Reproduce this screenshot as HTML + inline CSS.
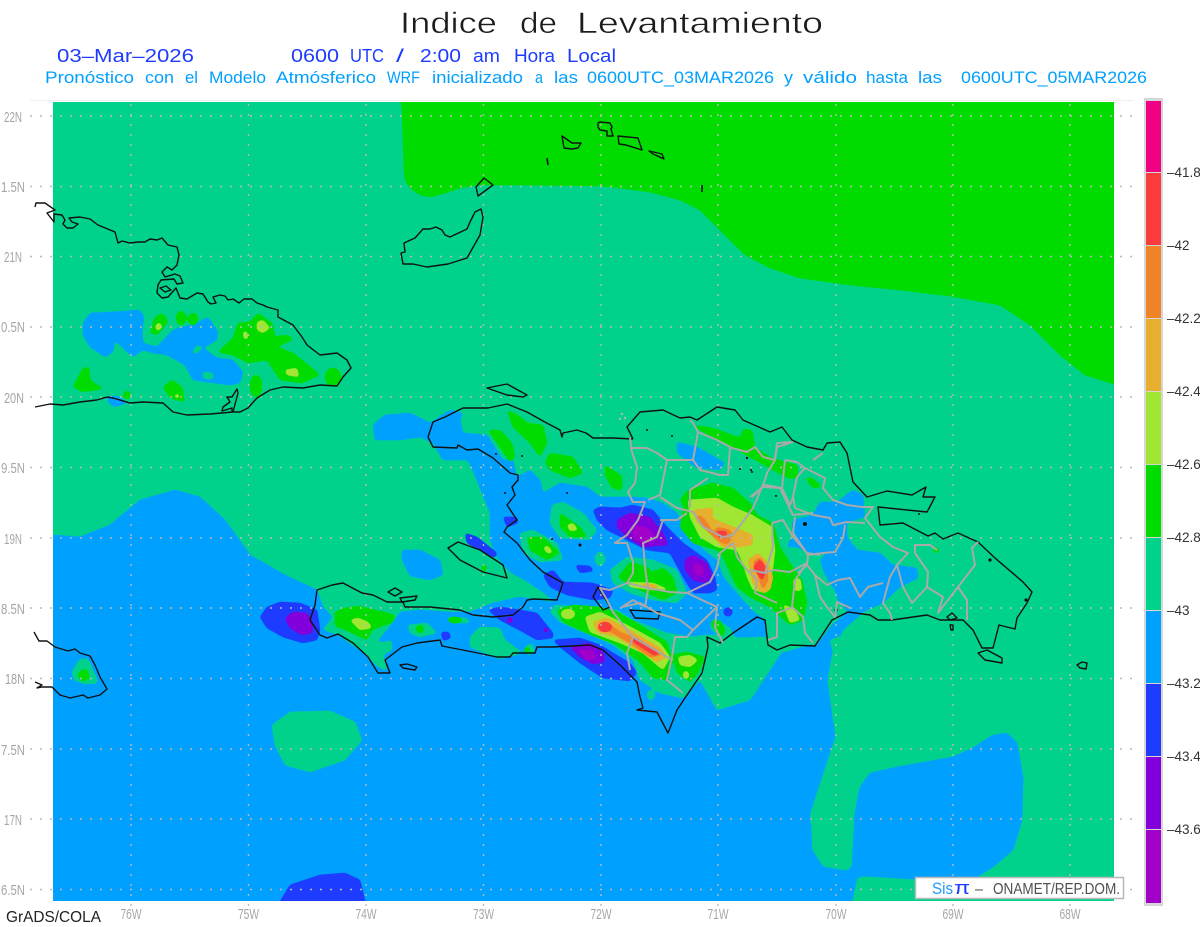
<!DOCTYPE html>
<html>
<head>
<meta charset="utf-8">
<title>Indice de Levantamiento</title>
<style>
html,body{margin:0;padding:0;background:#fff;width:1200px;height:927px;overflow:hidden}
svg{display:block;position:absolute;left:0;top:0}
text{font-family:"Liberation Sans",sans-serif}
</style>
</head>
<body>
<svg width="1200" height="927" viewBox="0 0 1200 927" xmlns="http://www.w3.org/2000/svg">
<defs>
<clipPath id="m"><rect x="53" y="102" width="1061" height="799"/></clipPath>
<filter id="s" filterUnits="userSpaceOnUse" x="0" y="60" width="1200" height="880" color-interpolation-filters="sRGB">
<feGaussianBlur stdDeviation="1.6"/>
<feComponentTransfer><feFuncA type="linear" slope="7" intercept="-2.4"/></feComponentTransfer>
</filter>
</defs>

<!-- titles -->
<g fill="#1c1c1c" stroke="#fff" stroke-width=".5" font-size="30">
<text x="400" y="33" textLength="97" lengthAdjust="spacingAndGlyphs">Indice</text>
<text x="520" y="33" textLength="37" lengthAdjust="spacingAndGlyphs">de</text>
<text x="577" y="33" textLength="246" lengthAdjust="spacingAndGlyphs">Levantamiento</text>
</g>
<g fill="#1e3cff" font-size="18">
<text x="57" y="62" textLength="137" lengthAdjust="spacingAndGlyphs">03–Mar–2026</text>
<text x="291" y="62" textLength="48" lengthAdjust="spacingAndGlyphs">0600</text>
<text x="350" y="62" textLength="34" lengthAdjust="spacingAndGlyphs">UTC</text>
<text x="396" y="62" textLength="8" lengthAdjust="spacingAndGlyphs">/</text>
<text x="420" y="62" textLength="41" lengthAdjust="spacingAndGlyphs">2:00</text>
<text x="473" y="62" textLength="27" lengthAdjust="spacingAndGlyphs">am</text>
<text x="514" y="62" textLength="41" lengthAdjust="spacingAndGlyphs">Hora</text>
<text x="567" y="62" textLength="49" lengthAdjust="spacingAndGlyphs">Local</text>
</g>
<g fill="#00a0ff" font-size="17">
<text x="45" y="83" textLength="89" lengthAdjust="spacingAndGlyphs">Pronóstico</text>
<text x="145" y="83" textLength="29" lengthAdjust="spacingAndGlyphs">con</text>
<text x="185" y="83" textLength="13" lengthAdjust="spacingAndGlyphs">el</text>
<text x="209" y="83" textLength="57" lengthAdjust="spacingAndGlyphs">Modelo</text>
<text x="276" y="83" textLength="100" lengthAdjust="spacingAndGlyphs">Atmósferico</text>
<text x="387" y="83" textLength="33" lengthAdjust="spacingAndGlyphs">WRF</text>
<text x="432" y="83" textLength="91" lengthAdjust="spacingAndGlyphs">inicializado</text>
<text x="535" y="83" textLength="8" lengthAdjust="spacingAndGlyphs">a</text>
<text x="554" y="83" textLength="24" lengthAdjust="spacingAndGlyphs">las</text>
<text x="587" y="83" textLength="187" lengthAdjust="spacingAndGlyphs">0600UTC_03MAR2026</text>
<text x="784" y="83" textLength="9" lengthAdjust="spacingAndGlyphs">y</text>
<text x="803" y="83" textLength="54" lengthAdjust="spacingAndGlyphs">válido</text>
<text x="866" y="83" textLength="42" lengthAdjust="spacingAndGlyphs">hasta</text>
<text x="918" y="83" textLength="24" lengthAdjust="spacingAndGlyphs">las</text>
<text x="961" y="83" textLength="186" lengthAdjust="spacingAndGlyphs">0600UTC_05MAR2026</text>
</g>

<!-- map -->
<rect x="53" y="102" width="1061" height="799" fill="#00d28c"/>
<g clip-path="url(#m)">
<g filter="url(#s)">
<polygon fill="#00dc00" points="400,90 402,110 404,170 405,180 410,188 420,195 430,197 445,193 460,188 470,186 480,185 520,185 600,186 620,188 650,192 680,200 700,210 715,225 730,240 745,255 770,268 800,278 850,285 900,290 950,296 1000,305 1030,325 1060,355 1085,375 1114,384 1130,386 1130,90"/>
</g>

<g filter="url(#s)" fill="#00a0ff">
<polygon points="40,535 53,535 80,537 110,525 140,500 175,490 200,497 225,520 250,555 285,575 317,590 323,607 332,617 322,630 337,635 363,653 377,667 388,672 384,655 393,650 392,640 377,642 393,623 400,612 420,610 447,612 470,612 493,603 520,597 550,602 557,604 543,592 525,580 510,572 497,557 490,540 490,527 490,513 477,480 468,460 443,460 433,443 420,437 400,440 375,440 373,425 385,415 410,413 430,423 450,410 463,413 460,420 463,433 487,435 503,460 513,460 517,477 530,470 540,480 543,493 560,483 587,487 600,497 633,497 647,498 663,503 677,513 683,527 693,540 707,553 717,560 723,577 740,597 755,613 765,620 767,637 783,653 803,647 817,645 832,625 848,612 862,613 843,630 832,653 827,680 835,737 823,773 810,813 812,850 823,867 847,871 852,867 855,813 860,787 870,773 897,767 953,757 973,748 993,735 1007,733 1017,743 1023,777 1022,820 1013,850 993,867 977,877 913,879 863,876 857,878 852,901 852,920 40,920"/>
<polygon points="83,323 90,313 113,312 140,310 144,317 142,333 143,343 157,347 173,330 197,323 208,317 218,332 217,340 203,348 217,358 233,360 243,372 240,383 230,385 207,382 193,380 185,365 167,355 153,353 143,350 133,357 125,350 115,340 113,352 105,357 90,347 83,335"/>
<polygon points="105,397 117,396 128,403 113,407"/>
<polygon points="402,550 420,550 440,560 443,575 430,580 410,576 402,560"/>
<polygon points="677,442 697,447 725,463 720,470 697,468 677,453"/>
<polygon points="792,527 793,520 813,515 820,502 837,502 853,490 863,495 865,517 847,522 847,537 857,550 880,553 893,565 917,568 918,578 900,587 883,603 867,610 862,613 848,612 838,600 835,590 825,575 820,560 827,553 810,553 797,547 787,547 790,540 797,537"/>
</g>

<!-- mint holes -->
<g filter="url(#s)" fill="#00d28c">
<polygon points="555,605 617,610 633,620 667,633 690,637 707,635 733,638 767,637 783,650 750,700 717,710 700,680 683,698 660,693 640,680 633,660 610,643 585,633 560,622 550,612"/>
<polygon points="520,533 533,530 557,543 563,560 540,562 523,553"/>
<polygon points="552,505 563,502 583,513 597,530 590,540 560,538 550,523"/>
<polygon points="610,570 627,557 653,560 677,570 687,593 677,603 653,600 630,593 613,583"/>
<ellipse cx="600" cy="559" rx="5" ry="7"/>
<polygon points="470,637 480,627 500,628 505,640 523,653 500,659 470,647"/>
<polygon points="445,617 467,618 470,623 452,623"/>
<polygon points="408,625 427,623 437,633 420,637 410,633"/>
<polygon points="525,647 532,643 535,653 527,655"/>
<polygon points="272,725 290,712 330,711 355,722 362,740 345,760 310,772 285,765 275,745"/>
<polygon points="192,352 198,345 203,348 195,354"/>
<polygon points="202,372 213,373 213,379 204,379"/>
<ellipse cx="651" cy="695" rx="4" ry="5"/>
<polygon points="72,672 80,659 88,659 95,675 98,683 85,684 74,680"/>
<polygon points="830,640 845,635 855,630 845,650 835,660"/>
<polygon points="713,618 730,628 735,638 718,635 710,628"/>
</g>

<!-- dark blue -->
<g filter="url(#s)" fill="#1e3cff">
<polygon points="260,617 267,607 280,602 300,603 317,610 320,630 317,640 303,643 283,637 267,628"/>
<polygon points="465,533 477,537 497,553 495,558 480,550 467,543"/>
<polygon points="503,517 517,517 518,523 507,527"/>
<polygon points="593,510 600,507 620,508 633,505 653,510 667,527 683,543 707,560 715,577 717,590 710,593 693,593 683,577 670,553 647,550 627,540 607,530 597,520"/>
<polygon points="543,575 553,570 563,582 593,583 613,590 610,598 593,600 567,595 550,587"/>
<polygon points="575,565 590,566 594,571 580,573"/>
<polygon points="488,610 500,607 520,610 537,613 553,633 553,638 537,640 523,632 500,620"/>
<polygon points="553,640 580,638 600,645 613,653 630,663 637,673 630,681 603,678 580,663 560,647"/>
<polygon points="441,632 449,632 451,638 443,641"/>
<circle cx="728" cy="612" r="4.5"/>
<polygon points="278,905 290,885 320,875 345,873 360,880 366,905"/>
</g>
<!-- violet -->
<g filter="url(#s)" fill="#8200dc">
<polygon points="285,618 293,612 307,613 313,623 312,633 302,635 290,628"/>
<polygon points="617,520 630,513 650,517 663,533 668,545 643,547 627,537 617,527"/>
<polygon points="685,560 693,555 707,563 712,577 705,583 693,580 685,570"/>
<polygon points="570,647 590,643 603,652 605,662 593,664 580,657"/>
<ellipse cx="510" cy="620" rx="3" ry="3"/>
<ellipse cx="546" cy="630" rx="3" ry="2"/>
</g>
<!-- purple -->
<g filter="url(#s)" fill="#a000c8">
<polygon points="633,525 648,528 657,540 645,544 633,538"/>
<polygon points="693,563 703,566 704,575 696,576"/>
<polygon points="578,650 592,650 597,659 587,660"/>
</g>

<!-- green -->
<g filter="url(#s)" fill="#00dc00">
<polygon points="150,333 155,317 163,313 168,322 157,335"/>
<ellipse cx="181" cy="318" rx="5" ry="7"/>
<ellipse cx="193" cy="319" rx="5" ry="6"/>
<polygon points="218,352 233,338 238,323 250,322 258,313 272,323 275,337 285,335 292,337 292,340 277,347 293,353 302,360 320,375 302,383 280,380 267,360 248,363 233,355"/>
<ellipse cx="333" cy="377" rx="8" ry="9"/>
<ellipse cx="256" cy="386" rx="6" ry="11"/>
<polygon points="73,387 83,368 89,367 90,380 100,387 108,388 83,392"/>
<polygon points="163,387 172,380 182,387 185,402 170,398"/>
<ellipse cx="127" cy="395" rx="4" ry="4"/>
<polygon points="488,430 500,430 512,443 515,457 510,462 497,443"/>
<polygon points="507,410 518,415 527,423 543,425 547,443 540,457 530,443 513,427"/>
<polygon points="550,453 573,457 583,473 570,478 550,470 545,462"/>
<polygon points="605,465 612,470 622,476 622,490 612,488 605,475"/>
<polygon points="560,513 580,527 587,537 570,537 560,527"/>
<polygon points="527,537 543,537 560,553 547,560 530,550"/>
<polygon points="618,577 630,562 647,567 652,572 663,568 673,577 677,593 663,600 633,587"/>
<polygon points="557,610 573,605 600,607 617,612 640,625 667,642 672,660 668,680 653,678 640,662 617,645 587,633 563,622"/>
<polygon points="672,655 687,652 705,657 698,673 690,682 677,673"/>
<polygon points="688,490 713,483 733,488 750,503 757,515 773,523 780,547 790,563 802,580 807,603 803,620 790,625 770,607 750,597 737,587 723,557 717,550 693,543 680,527 684,507 680,500"/>
<polygon points="693,425 713,428 740,438 743,429 752,430 755,448 772,458 785,462 797,465 798,477 790,479 773,470 750,457 723,442 703,432"/>
<polygon points="805,478 812,478 822,487 813,488"/>
<polygon points="710,622 720,620 725,630 723,637 715,630"/>
<ellipse cx="936" cy="550" rx="3" ry="3"/>
<ellipse cx="484" cy="568" rx="2.5" ry="3.5"/>
<ellipse cx="420" cy="629" rx="4" ry="4"/>
<ellipse cx="455" cy="620" rx="7" ry="3"/>
<ellipse cx="527" cy="650" rx="3" ry="3"/>
<polygon points="77,674 86,668 90,678 82,682"/>
<polygon points="335,612 345,608 358,606 375,610 395,615 393,622 372,630 367,640 358,636 346,630 335,626"/>
</g>

<!-- yellow green -->
<g filter="url(#s)" fill="#a0e632">
<polygon points="155,326 160,322 162,328 157,331"/>
<polygon points="257,322 263,320 270,328 263,333 257,330"/>
<polygon points="243,332 247,331 248,339 244,339"/>
<polygon points="285,370 297,368 299,377 287,375"/>
<ellipse cx="177" cy="396" rx="2.5" ry="2"/>
<polygon points="567,525 573,523 578,530 570,531"/>
<polygon points="543,547 548,546 553,553 547,553"/>
<polygon points="627,582 653,583 670,590 653,590 630,587"/>
<polygon points="585,617 600,612 627,625 660,643 670,657 663,670 643,653 620,643 590,632"/>
<ellipse cx="568" cy="614" rx="7" ry="5"/>
<polygon points="678,657 690,655 698,660 690,667 680,665"/>
<ellipse cx="686" cy="675" rx="3" ry="4"/>
<polygon points="688,500 717,498 733,507 752,515 772,527 775,550 773,567 767,593 753,590 747,577 743,563 737,550 717,547 700,537 690,517"/>
<polygon points="793,580 800,578 802,590 795,591"/>
<polygon points="783,604 795,610 800,620 790,623"/>
<polygon points="350,620 358,618 368,622 372,628 360,630"/>
</g>

<!-- gold -->
<g filter="url(#s)" fill="#e6af2d">
<polygon points="593,622 607,618 630,630 660,648 667,657 657,662 633,647 617,637 597,632"/>
<polygon points="636,583 652,584 662,588 650,588"/>
<polygon points="693,510 713,508 712,518 723,523 753,535 752,545 737,547 723,547 710,533 697,522"/>
<polygon points="748,560 758,553 768,563 773,577 770,590 762,593 753,583 750,570"/>
</g>
<!-- orange -->
<g filter="url(#s)" fill="#f08228">
<polygon points="597,627 607,622 620,632 633,637 663,655 650,657 630,643 613,633"/>
<polygon points="695,515 703,517 713,532 718,527 730,530 733,537 727,545 717,540 703,527"/>
<polygon points="753,562 760,557 767,567 768,580 763,590 757,573"/>
</g>
<!-- red -->
<g filter="url(#s)" fill="#fa3c3c">
<ellipse cx="605" cy="627" rx="7" ry="5"/>
<polygon points="633,636 660,652 655,656 633,642"/>
<polygon points="715,531 727,531 726,538 719,538"/>
<polygon points="753,567 760,559 767,570 762,581"/>
</g>
</g>

<!-- grid -->
<g stroke="#b9b9b9" stroke-width="1.4" stroke-dasharray="2 8" fill="none">
<path d="M30 116H1133M30 186.5H1133M30 256.5H1133M30 327H1133M30 397H1133M30 467.5H1133M30 538H1133M30 608H1133M30 678.5H1133M30 749H1133M30 819H1133M30 889.5H1133"/>
<path d="M131 104V908M248.5 104V908M366 104V908M483.5 104V908M601 104V908M718 104V908M836 104V908M953 104V908M1070 104V908"/>
</g>
<line x1="30" y1="100.5" x2="1133" y2="100.5" stroke="#eee" stroke-width="1"/>

<!-- coast -->
<g fill="none" stroke="#111" stroke-width="1.4" stroke-linejoin="round">
<polyline points="35,207 36,203 45,203 55,210 47,213 54,222 54,214 62,215 65,220 63,224 67,228 73,228 78,224 72,222 69,218 80,217 90,219 98,225 115,232 118,243 122,241 130,243 138,242 145,242 150,239 157,240 162,238 168,245 177,247 179,255 177,265 172,270 167,267 162,272 165,277 175,274 180,276 183,283 177,284 174,279 161,280 158,285 157,293 162,298 168,297 176,288 180,298 187,299 197,293 203,294 208,302 211,304 216,303 213,297 220,295 225,296 228,300 233,299 239,303 244,299 252,299 257,303 263,305 267,307 278,310 278,317 293,325 302,337 307,345 320,355 337,353 347,360 351,368 343,377 337,386 320,385 303,388 283,387 270,390 257,398 248,408 240,412 233,412 238,393 237,389 232,397 227,397 230,402 223,407 222,411 232,408 232,412 222,413 210,414 187,415 173,412 163,403 143,402 130,403 113,398 107,397 97,400 80,402 63,405 50,404 35,407"/>
<polygon points="160,288 166,286 171,290 165,292"/>
<polygon points="401,253 405,252 404,243 415,238 423,229 430,229 436,227 442,230 445,235 450,237 467,229 470,222 475,212 481,209 483,217 480,235 467,258 448,264 427,267 413,264 403,264"/>
<polygon points="476,187 484,178 493,185 478,196"/>
<polygon points="562,136 572,143 581,143 578,148 572,149 564,148"/>
<polygon points="598,123 600,122 610,123 612,127 611,129 613,136 607,136 607,131 600,130 598,127"/>
<polygon points="618,136 638,138 642,150 626,145 619,144"/>
<polygon points="649,151 662,154 664,159 653,154"/>
<path d="M547 158L548 165M702 185L702 192" stroke-width="1.6"/>
<polyline points="34,632 39,641 47,641 55,647 68,651 75,649 80,653 90,656 95,665 100,677 107,689 100,695 88,698 83,695 70,698 60,695 52,687 42,687 37,688 42,685 35,682"/>
<polygon points="487,388 507,384 527,395 523,397 507,395"/>
<polygon points="448,548 458,542 480,550 503,565 507,578 483,572 460,560"/>
<polygon points="400,665 407,664 417,667 415,670 403,668"/>
<polygon points="388,592 395,588 402,592 395,596"/>
<polygon points="400,598 417,596 415,600 402,602"/>
<polygon points="593,597 598,587 610,607 603,610"/>
<polygon points="630,610 660,612 658,619 635,618"/>
<polyline points="633,439 613,438 593,438 586,433 577,430 563,433 562,437 560,430 543,421 527,412 507,404 488,408 463,408 445,417 433,422 428,437 433,447 457,448 458,445 467,450 478,449 493,458 510,473 518,475 518,480 512,487 515,495 507,505 517,520 507,527 504,532 517,543 530,560 543,572 563,583 557,600 533,599 527,600 523,607 513,615 493,617 473,615 460,610 430,607 405,607 403,602 387,602 373,595 362,593 343,583 332,585 317,590 315,605 310,620 320,635 327,638 338,634 353,643 368,657 378,673 390,673 385,660 402,647 417,643 440,640 442,646 473,652 497,657 510,657 513,653 535,653 537,647 553,647 590,645 603,650 620,665 637,682 640,697 643,708 637,710 657,712 668,733 677,710 685,698 702,673 708,647 707,637 720,643 733,633 757,617 765,620 768,645 777,650 790,645 815,646 832,620 848,612 870,615 878,620 892,620 927,615 940,620 963,620 973,630 982,648 993,648 999,625 1015,629 1017,618 1027,603 1032,592 1023,582 995,558 978,542 958,533 943,539 935,533 928,536 903,523 880,525 878,507 927,512 935,497 923,497 926,487 912,495 887,491 867,497 853,482 847,453 840,442 827,443 823,450 807,447 792,440 782,427 770,432 743,420 735,410 717,407 697,420 690,417 680,418 663,410 640,412 627,427 633,439"/>
<polygon points="978,653 987,650 1002,658 1002,663 985,660"/>
<polygon points="1077,665 1082,662 1087,663 1086,669 1080,668"/>
<polygon points="947,617 952,613 957,618 950,620"/>
<polygon points="950,625 953,625 953,630 951,630"/>
</g>
<g fill="#111">
<circle cx="747" cy="458" r="1.2"/><circle cx="740" cy="469" r="1"/><circle cx="751" cy="470" r="1"/><circle cx="752" cy="472" r="1"/><circle cx="805" cy="524" r="2"/><circle cx="990" cy="560" r="1.6"/><circle cx="1026" cy="600" r="1.6"/><circle cx="836" cy="610" r="1.6"/><circle cx="847" cy="607" r="1"/><circle cx="776" cy="496" r="1"/><circle cx="919" cy="514" r="1"/><circle cx="496" cy="454" r="1"/><circle cx="505" cy="493" r="1"/><circle cx="567" cy="493" r="1"/><circle cx="580" cy="545" r="1.5"/><circle cx="552" cy="539" r="1"/><circle cx="647" cy="430" r="1"/><circle cx="672" cy="436" r="1"/><circle cx="522" cy="456" r="1"/>
</g>
<g fill="#b4b4b4"><circle cx="622" cy="414" r="1.2"/><circle cx="625" cy="418" r="1.2"/><circle cx="620" cy="419" r="1.2"/><circle cx="642" cy="515" r="1"/></g>

<!-- provinces -->
<g fill="none" stroke="#a9a9a9" stroke-width="2" stroke-linejoin="round">
<polyline points="630,438 632,452 637,467 635,483 628,492 633,502 645,502 638,520 627,535 615,543 627,543 633,562 633,573 627,583 610,590 600,588 607,600 613,612 627,630 633,637 627,653 630,670"/>
<polyline points="630,448 647,448 657,453 667,460 663,480 660,495 648,500"/>
<polyline points="667,460 693,460 698,432 693,423 690,420"/>
<polyline points="698,432 717,440 732,448 747,452 755,447 763,457 775,460 777,443 792,442"/>
<polyline points="693,460 700,470 720,475 728,475 730,448"/>
<polyline points="708,478 690,490 690,508"/>
<polyline points="660,497 677,508 693,512 703,527 723,537 733,535 753,508 765,480 767,473 775,460"/>
<polyline points="750,497 763,487 780,488 788,505 793,515 813,513"/>
<polyline points="660,520 677,520 687,513"/>
<polyline points="663,520 657,537 643,543 645,567 648,590 645,607"/>
<polyline points="627,583 648,588 670,592 687,593 710,582 717,568 720,553 733,543 737,557 747,570 757,580 755,593 777,603"/>
<polyline points="772,523 773,547 765,573 750,570"/>
<polyline points="765,573 773,570 790,572 807,563 795,580 792,607 803,617 805,633 813,643"/>
<polyline points="772,523 783,520 793,537 807,553 820,555"/>
<polyline points="793,607 777,613 777,637 768,640"/>
<polyline points="687,593 717,607 693,630 680,620 657,613 640,603 622,607 633,600 645,607"/>
<polyline points="717,607 715,627 723,643"/>
<polyline points="693,630 687,637 675,637 672,657 667,680 683,693"/>
<polyline points="633,637 667,657 673,660"/>
<polyline points="793,442 777,447 775,460"/>
<polyline points="785,460 797,462 805,468 825,478 823,488 833,500 847,505 862,507 873,507 865,518 880,537 893,547 908,553 897,565 890,577 883,603 890,613 892,620"/>
<polyline points="813,460 823,453"/>
<polyline points="805,468 797,477 793,497 795,508 813,515 830,518 833,525 847,522 865,523"/>
<polyline points="795,517 793,533 808,555 807,565 798,573"/>
<polyline points="808,555 823,553 835,552 843,538 845,525"/>
<polyline points="807,565 815,575 827,585 838,580 850,578 860,597 868,587 883,583"/>
<polyline points="815,575 820,597 827,607 835,617 837,602 850,608"/>
<polyline points="897,565 903,587 912,603 927,587 928,572 915,553 915,545 930,545 937,550"/>
<polyline points="927,587 943,597 938,613 958,587 967,600 967,620"/>
<polyline points="958,587 975,565 972,548 978,542"/>
<polyline points="785,460 782,488 790,505 793,497"/>
<polyline points="782,488 765,485 752,497"/>
</g>

<!-- axis labels -->
<g fill="#a6a6a6" font-size="15">
<text x="4" y="122" textLength="18" lengthAdjust="spacingAndGlyphs">22N</text>
<text x="1" y="192" textLength="24" lengthAdjust="spacingAndGlyphs">1.5N</text>
<text x="4" y="262" textLength="18" lengthAdjust="spacingAndGlyphs">21N</text>
<text x="1" y="332" textLength="24" lengthAdjust="spacingAndGlyphs">0.5N</text>
<text x="4" y="403" textLength="20" lengthAdjust="spacingAndGlyphs">20N</text>
<text x="1" y="473" textLength="24" lengthAdjust="spacingAndGlyphs">9.5N</text>
<text x="4" y="544" textLength="18" lengthAdjust="spacingAndGlyphs">19N</text>
<text x="1" y="614" textLength="24" lengthAdjust="spacingAndGlyphs">8.5N</text>
<text x="5" y="684" textLength="20" lengthAdjust="spacingAndGlyphs">18N</text>
<text x="1" y="755" textLength="24" lengthAdjust="spacingAndGlyphs">7.5N</text>
<text x="4" y="825" textLength="18" lengthAdjust="spacingAndGlyphs">17N</text>
<text x="1" y="895" textLength="24" lengthAdjust="spacingAndGlyphs">6.5N</text>
<text x="120.500" y="919" textLength="21" lengthAdjust="spacingAndGlyphs">76W</text>
<text x="238" y="919" textLength="21" lengthAdjust="spacingAndGlyphs">75W</text>
<text x="355.500" y="919" textLength="21" lengthAdjust="spacingAndGlyphs">74W</text>
<text x="473" y="919" textLength="21" lengthAdjust="spacingAndGlyphs">73W</text>
<text x="590.500" y="919" textLength="21" lengthAdjust="spacingAndGlyphs">72W</text>
<text x="707.500" y="919" textLength="21" lengthAdjust="spacingAndGlyphs">71W</text>
<text x="825.500" y="919" textLength="21" lengthAdjust="spacingAndGlyphs">70W</text>
<text x="942.500" y="919" textLength="21" lengthAdjust="spacingAndGlyphs">69W</text>
<text x="1059.500" y="919" textLength="21" lengthAdjust="spacingAndGlyphs">68W</text>
</g>
<text x="6" y="922" fill="#222" font-size="15.500" textLength="95" lengthAdjust="spacingAndGlyphs">GrADS/COLA</text>

<!-- logo box -->
<rect x="915.500" y="877.500" width="208" height="21" fill="#fff" stroke="#b8b8b8" stroke-width="1.500"/>
<text x="932" y="894" fill="#1e9bff" font-size="16.500" textLength="21" lengthAdjust="spacingAndGlyphs">Sis</text>
<text x="954" y="894" fill="#1e3cff" font-size="18" textLength="16" lengthAdjust="spacingAndGlyphs">π</text>
<text x="975" y="894" fill="#505050" font-size="15.500" textLength="8" lengthAdjust="spacingAndGlyphs">–</text>
<text x="993" y="894" fill="#505050" font-size="15.500" textLength="127" lengthAdjust="spacingAndGlyphs">ONAMET/REP.DOM.</text>

<!-- colorbar -->
<rect x="1144" y="98" width="19" height="808" fill="#d6d6d6"/>
<rect x="1146" y="101" width="15" height="71" fill="#f00082"/>
<rect x="1146" y="173" width="15" height="72" fill="#fa3c3c"/>
<rect x="1146" y="246" width="15" height="72" fill="#f08228"/>
<rect x="1146" y="319" width="15" height="72" fill="#e6af2d"/>
<rect x="1146" y="392" width="15" height="72" fill="#a0e632"/>
<rect x="1146" y="465" width="15" height="72" fill="#00dc00"/>
<rect x="1146" y="538" width="15" height="72" fill="#00d28c"/>
<rect x="1146" y="611" width="15" height="72" fill="#00a0ff"/>
<rect x="1146" y="684" width="15" height="72" fill="#1e3cff"/>
<rect x="1146" y="757" width="15" height="72" fill="#8200dc"/>
<rect x="1146" y="830" width="15" height="73" fill="#a000c8"/>
<g fill="#333" font-size="13.500">
<text x="1167" y="177">–41.8</text>
<text x="1167" y="250">–42</text>
<text x="1167" y="323">–42.2</text>
<text x="1167" y="396">–42.4</text>
<text x="1167" y="469">–42.6</text>
<text x="1167" y="542">–42.8</text>
<text x="1167" y="615">–43</text>
<text x="1167" y="688">–43.2</text>
<text x="1167" y="761">–43.4</text>
<text x="1167" y="834">–43.6</text>
</g>
</svg>
</body>
</html>
